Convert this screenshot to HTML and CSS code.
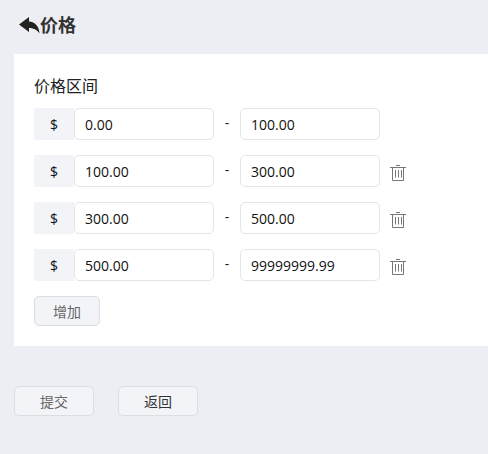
FILE: index.html
```html
<!DOCTYPE html>
<html lang="zh">
<head>
<meta charset="utf-8">
<title>价格</title>
<link rel="stylesheet" href="styles.css">
</head>
<body>
<header class="title">
  <svg class="back" width="21" height="17" viewBox="0 0 21 17"><path d="M0 7.500 L10 0 V4.500 C16 5 20 9 20.500 16.500 C18 12.500 14 11 10 11 V15 Z" fill="#222"/></svg>
  <h1>价格</h1>
</header>
<main class="card">
  <div class="label">价格区间</div>
  <div class="row">
    <span class="addon">$</span><input class="field" value="0.00"><span class="dash">-</span><input class="field" value="100.00">
  </div>
  <div class="row">
    <span class="addon">$</span><input class="field" value="100.00"><span class="dash">-</span><input class="field" value="300.00">
    <svg class="trash" width="16" height="16" viewBox="0 0 16 16"><path d="M0 2.500H16M6 .5H10M2.500 2.500V15.500H13.500V2.500M5.500 5V12.500M8.500 5V12.500M11.500 5V12.500" fill="none" stroke="#777" stroke-width="1"/></svg>
  </div>
  <div class="row">
    <span class="addon">$</span><input class="field" value="300.00"><span class="dash">-</span><input class="field" value="500.00">
    <svg class="trash" width="16" height="16" viewBox="0 0 16 16"><path d="M0 2.500H16M6 .5H10M2.500 2.500V15.500H13.500V2.500M5.500 5V12.500M8.500 5V12.500M11.500 5V12.500" fill="none" stroke="#777" stroke-width="1"/></svg>
  </div>
  <div class="row">
    <span class="addon">$</span><input class="field" value="500.00"><span class="dash">-</span><input class="field" value="99999999.99">
    <svg class="trash" width="16" height="16" viewBox="0 0 16 16"><path d="M0 2.500H16M6 .5H10M2.500 2.500V15.500H13.500V2.500M5.500 5V12.500M8.500 5V12.500M11.500 5V12.500" fill="none" stroke="#777" stroke-width="1"/></svg>
  </div>
  <button class="btn add">增加</button>
</main>
<footer class="actions">
  <button class="btn wide">提交</button>
  <button class="btn wide dark">返回</button>
</footer>
</body>
</html>
```
FILE: styles.css
```css
* { box-sizing: border-box; }
html, body { margin: 0; height: 100%; }
body {
  background: #edeef3;
  font-family: "Open Sans", "Noto Sans CJK SC", sans-serif;
  color: #222;
  overflow: hidden;
  padding-left: 14px;
}
.title { display: flex; align-items: center; height: 54px; padding: 0 0 6px 5px; }
.back { margin-top: 2px; }
h1 { margin: 0; font-size: 18px; font-weight: 700; color: #333; font-family: "Noto Sans CJK SC", sans-serif; }
.card { background: #fff; height: 292px; padding: 20px 20px 0; }
.label { font-size: 16px; font-weight: 400; line-height: 22px; height: 34px; color: #222; font-family: "Noto Sans CJK SC", sans-serif; }
.row { display: flex; align-items: center; height: 32px; margin-bottom: 15px; }
.addon { width: 40px; height: 32px; background: #f3f4f8; display: flex; align-items: center; justify-content: center; font-size: 14px; font-weight: 400; color: #112; }
.field { width: 140px; height: 32px; border: 1px solid #e4e5e8; border-radius: 5px; padding: 0 10px; font: 14px "Open Sans", sans-serif; color: #111; background: #fff; outline: none; }
.dash { width: 26px; text-align: center; font-size: 14px; position: relative; top: -2px; }
.trash { margin: 4px 0 0 10px; }
.btn { height: 30px; border: 1px solid #dcdde2; border-radius: 5px; background: #f3f4f8; font: 14px "Noto Sans CJK SC", sans-serif; color: #666; padding: 0; }
.add { width: 66px; display: block; }
.actions { display: flex; gap: 24px; margin-top: 40px; }
.wide { width: 80px; }
.dark { color: #333; }
```
